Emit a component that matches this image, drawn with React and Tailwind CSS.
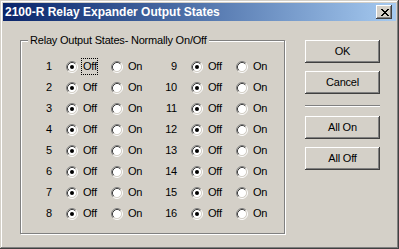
import React from "react";

function Radio({ checked }) {
  return (
    <svg width="12" height="12" viewBox="0 0 12 12" className="shrink-0 block">
      <circle cx="6" cy="6" r="4.5" fill="#ffffff" />
      <path d="M2.11 9.89 A5.5 5.5 0 0 1 9.89 2.11" fill="none" stroke="#808080" strokeWidth="1" />
      <path d="M9.89 2.11 A5.5 5.5 0 0 1 2.11 9.89" fill="none" stroke="#ffffff" strokeWidth="1" />
      <path d="M2.82 9.18 A4.5 4.5 0 0 1 9.18 2.82" fill="none" stroke="#404040" strokeWidth="1" />
      <path d="M9.18 2.82 A4.5 4.5 0 0 1 2.82 9.18" fill="none" stroke="#d4d0c8" strokeWidth="1" />
      {checked && <circle cx="6" cy="6" r="2" fill="#000000" />}
    </svg>
  );
}

function Col({ n, focus }) {
  return (
    <div className="flex items-center w-[125px]">
      <span className="w-[20px] text-right">{n}</span>
      <span className="ml-[14px]">
        <Radio checked />
      </span>
      <span
        className={
          focus
            ? "ml-[3px] w-[17px] h-[17px] flex items-center pl-[1px] border border-dotted border-black mr-[13px]"
            : "ml-[3px] w-[17px] h-[17px] flex items-center pl-[1px] border border-transparent mr-[13px]"
        }
      >
        Off
      </span>
      <Radio />
      <span className="ml-[3px] h-[17px] flex items-center pl-[1px] border border-transparent">On</span>
    </div>
  );
}

function Button({ children, className = "" }) {
  return (
    <div
      className={
        "w-[75px] h-[23px] flex items-center justify-center bg-[#d4d0c8] text-black shadow-[inset_-1px_-1px_#404040,inset_1px_1px_#ffffff,inset_-2px_-2px_#808080] " +
        className
      }
    >
      {children}
    </div>
  );
}

export default function App() {
  const rows = [1, 2, 3, 4, 5, 6, 7, 8];
  return (
    <div className="w-[399px] h-[249px] bg-[#d4d0c8] p-[3px] flex flex-col text-[11px] tracking-[-0.2px] text-black font-['Liberation_Sans',Arial,sans-serif] shadow-[inset_-1px_-1px_#404040,inset_1px_1px_#d4d0c8,inset_-2px_-2px_#808080,inset_2px_2px_#ffffff] overflow-hidden">
      <div className="h-[18px] flex items-center bg-gradient-to-r from-[#0a246a] to-[#a6caf0] pl-[2px] pr-[4px]">
        <span className="text-white font-bold text-[12px] tracking-normal leading-none">
          2100-R Relay Expander Output States
        </span>
        <div className="ml-auto w-[16px] h-[14px] bg-[#d4d0c8] flex items-center justify-center pl-[1px] shadow-[inset_-1px_-1px_#404040,inset_1px_1px_#ffffff,inset_-2px_-2px_#808080]">
          <svg width="8" height="7" viewBox="0 0 8 7" shapeRendering="crispEdges" className="block">
            <path
              d="M0 0h2v1h-2z M6 0h2v1h-2z M1 1h2v1h-2z M5 1h2v1h-2z M2 2h4v1h-4z M3 3h2v1h-2z M2 4h4v1h-4z M1 5h2v1h-2z M5 5h2v1h-2z M0 6h2v1h-2z M6 6h2v1h-2z"
              fill="#000"
            />
          </svg>
        </div>
      </div>
      <div className="flex">
        <div className="relative ml-[17px] mt-[19px] w-[265px] h-[194px] border border-[#808080] shadow-[1px_1px_0_#ffffff,inset_1px_1px_0_#ffffff] pl-[11px] pt-[15px]">
          <span className="absolute left-[7px] top-[-8px] px-[2px] bg-[#d4d0c8] leading-[14px]">
            Relay Output States- Normally On/Off
          </span>
          {rows.map((i) => (
            <div key={i} className="flex items-center h-[21px]">
              <Col n={i} focus={i === 1} />
              <Col n={i + 8} />
            </div>
          ))}
        </div>
        <div className="ml-[20px] mt-[19px] flex flex-col">
          <Button>OK</Button>
          <Button className="mt-[8px]">Cancel</Button>
          <div className="mt-[11px] h-[2px] w-[75px] border-t border-[#808080] border-b border-b-white" />
          <Button className="mt-[9px]">All On</Button>
          <Button className="mt-[8px]">All Off</Button>
        </div>
      </div>
    </div>
  );
}
